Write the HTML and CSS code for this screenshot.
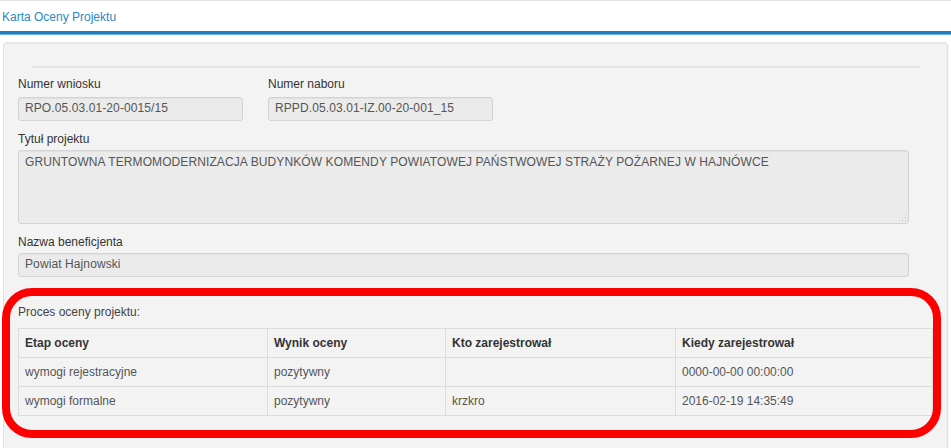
FILE: index.html
```html
<!DOCTYPE html>
<html lang="pl">
<head>
<meta charset="utf-8">
<title>Karta Oceny Projektu</title>
<link rel="stylesheet" href="styles.css">
</head>
<body>
<div class="topline"></div>
<header class="page-header">
  <span class="page-title">Karta Oceny Projektu</span>
</header>
<div class="page-rule"></div>
<main class="panel">
  <div class="panel-rule"></div>
  <div class="row">
    <div class="field">
      <label class="label">Numer wniosku</label>
      <input class="input input-short" type="text" value="RPO.05.03.01-20-0015/15" readonly>
    </div>
    <div class="field">
      <label class="label">Numer naboru</label>
      <input class="input input-short" type="text" value="RPPD.05.03.01-IZ.00-20-001_15" readonly>
    </div>
  </div>
  <div class="field field-gap">
    <label class="label label-tight">Tytuł projektu</label>
    <div class="textarea-wrap">
      <textarea class="input textarea" readonly>GRUNTOWNA TERMOMODERNIZACJA BUDYNKÓW KOMENDY POWIATOWEJ PAŃSTWOWEJ STRAŻY POŻARNEJ W HAJNÓWCE</textarea>
      <span class="grip"></span>
    </div>
  </div>
  <div class="field field-gap">
    <label class="label label-tight">Nazwa beneficjenta</label>
    <input class="input input-wide" type="text" value="Powiat Hajnowski" readonly>
  </div>
  <section class="process">
    <div class="process-title">Proces oceny projektu:</div>
    <table class="grid">
      <colgroup>
        <col style="width:249px">
        <col style="width:178px">
        <col style="width:230px">
        <col style="width:257px">
      </colgroup>
      <thead>
        <tr><th>Etap oceny</th><th>Wynik oceny</th><th>Kto zarejestrował</th><th>Kiedy zarejestrował</th></tr>
      </thead>
      <tbody>
        <tr><td>wymogi rejestracyjne</td><td>pozytywny</td><td></td><td>0000-00-00 00:00:00</td></tr>
        <tr><td>wymogi formalne</td><td>pozytywny</td><td>krzkro</td><td>2016-02-19 14:35:49</td></tr>
      </tbody>
    </table>
    <div class="highlight"></div>
  </section>
</main>
</body>
</html>
```

FILE: styles.css
```css
html, body {
  margin: 0;
  padding: 0;
  background: #ffffff;
  font-family: "Liberation Sans", Arial, sans-serif;
  font-size: 12px;
  line-height: 16px;
  color: #333333;
  overflow: hidden;
}

.topline {
  height: 1px;
  background: #e4e4e4;
}

.page-header {
  height: 30px;
  padding-left: 2px;
  box-sizing: border-box;
  padding-top: 8px;
}

.page-title {
  color: #2a88c8;
  font-size: 12px;
  line-height: 16px;
}

.page-rule {
  height: 3px;
  background: #1a7fc2;
  border-bottom: 1px solid #6fb0dc;
}

.panel {
  margin: 7px 3px 0 3px;
  background: #f3f3f3;
  border: 1px solid #e1e1e1;
  border-top: 2px solid #e8e8e8;
  border-radius: 4px;
  padding: 0 0 40px 14px;
  box-shadow: 1px 1px 1px rgba(0, 0, 0, 0.04);
}

.panel-rule {
  margin: 22px 27px 0 14px;
  height: 2px;
  background: #e4e4e4;
}

.row {
  display: flex;
  gap: 25px;
  margin-top: 8px;
}

.field {
  display: flex;
  flex-direction: column;
  align-items: flex-start;
}

.field-gap {
  margin-top: 10px;
}

.label {
  display: block;
  line-height: 16px;
  color: #333333;
  margin-bottom: 5px;
}

.label-tight {
  margin-bottom: 3px;
}

.input {
  box-sizing: border-box;
  height: 24px;
  padding: 2px 5px 4px 6px;
  margin: 0;
  border: 1px solid #d3d3d3;
  border-radius: 3px;
  background: #ebebeb;
  color: #555555;
  font-family: "Liberation Sans", Arial, sans-serif;
  font-size: 12px;
  line-height: 16px;
  letter-spacing: 0.1px;
  outline: none;
  box-shadow: inset 0 1px 1px rgba(0, 0, 0, 0.04);
}

.input-short {
  width: 225px;
}

.input-wide {
  width: 891px;
}

.textarea-wrap {
  position: relative;
  width: 891px;
  height: 74px;
}

.textarea {
  width: 891px;
  height: 74px;
  padding: 3px 6px;
  resize: none;
  overflow: hidden;
  display: block;
}

.grip {
  position: absolute;
  right: 2px;
  bottom: 2px;
  width: 9px;
  height: 9px;
  background-image: radial-gradient(circle, #b5b5b5 0.7px, transparent 0.9px);
  background-size: 3px 3px;
  clip-path: polygon(100% 0, 100% 100%, 0 100%);
}

.process {
  position: relative;
  width: 914px;
  margin-top: 27px;
}

.process-title {
  line-height: 16px;
  color: #444444;
  margin-bottom: 8px;
}

.grid {
  width: 914px;
  border-collapse: collapse;
  table-layout: fixed;
  border: 1px solid #dcdcdc;
}

.grid th,
.grid td {
  border: 1px solid #dcdcdc;
  padding: 6px 6px;
  line-height: 16px;
  text-align: left;
  height: 16px;
}

.grid th {
  font-weight: bold;
  color: #333333;
}

.grid td {
  color: #555555;
}

.highlight {
  position: absolute;
  left: -16px;
  top: -16px;
  right: -9px;
  bottom: -22px;
  border: 8px solid #ff0000;
  border-radius: 30px;
  pointer-events: none;
}
```
